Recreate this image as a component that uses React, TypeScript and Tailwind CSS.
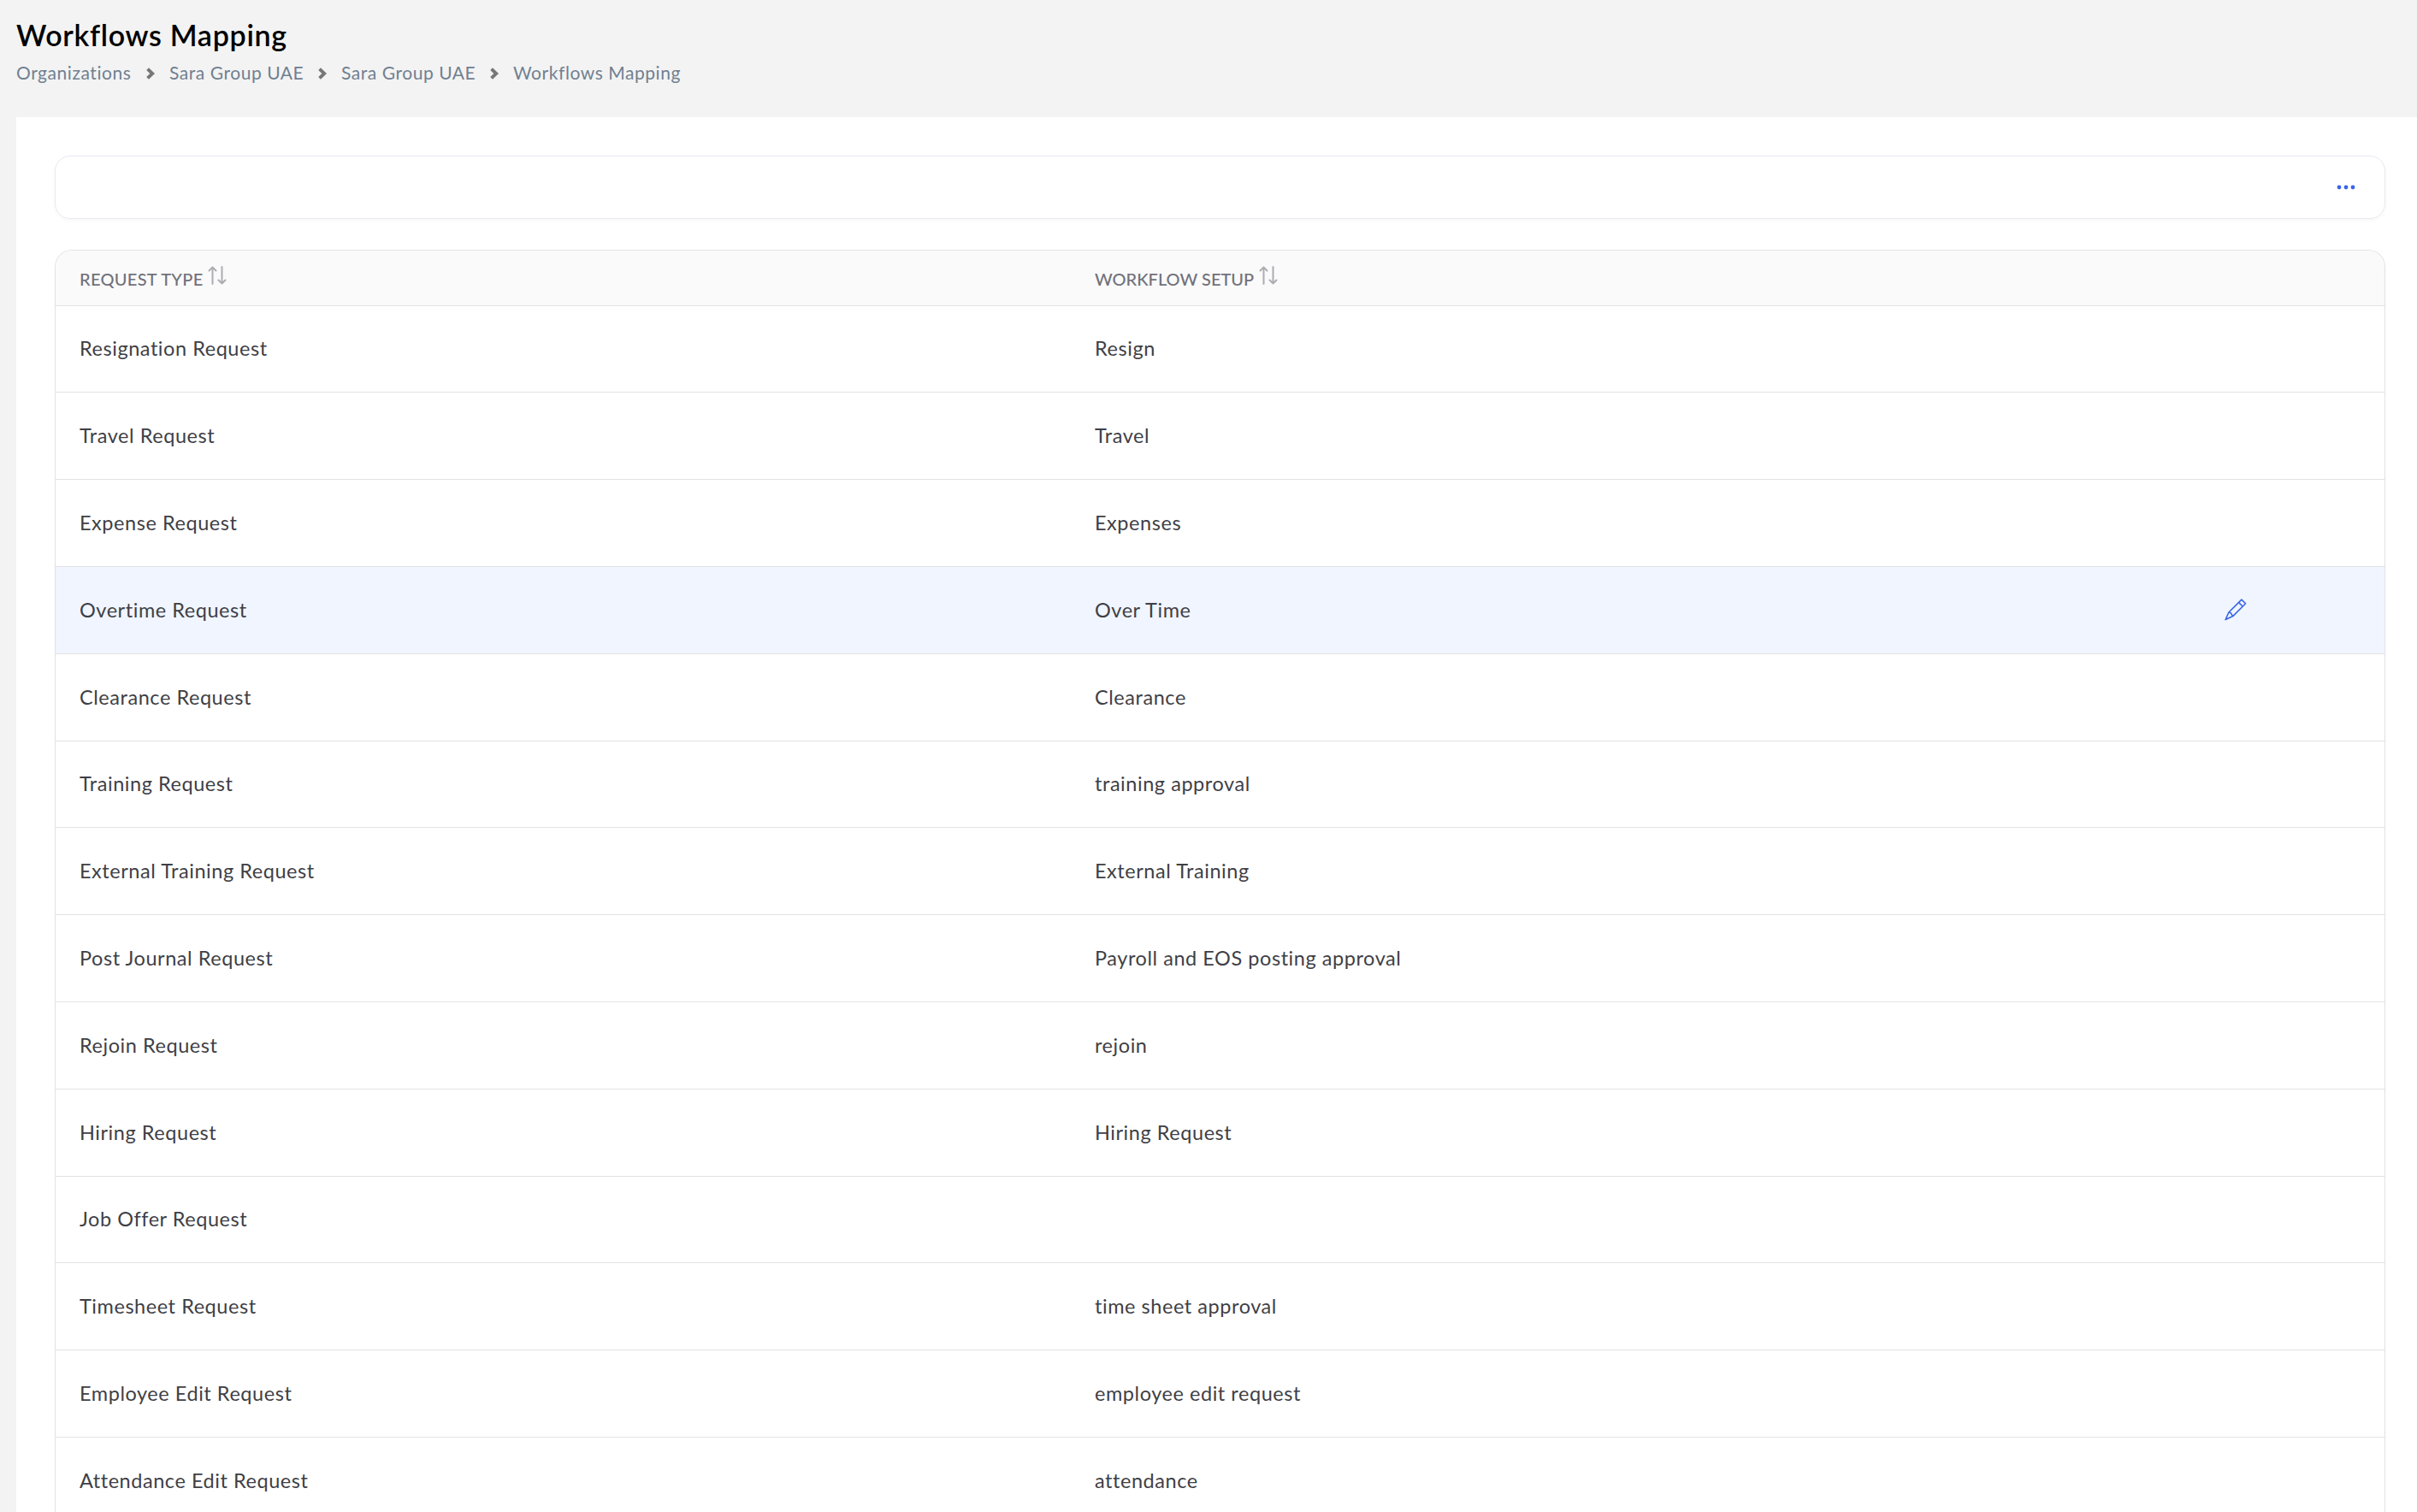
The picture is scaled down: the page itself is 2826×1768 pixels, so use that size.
const breadcrumbs = [
  { label: 'Organizations', width: 'w-[179px]' },
  { label: 'Sara Group UAE', width: 'w-[201px]' },
  { label: 'Sara Group UAE', width: 'w-[201px]' },
  { label: 'Workflows Mapping', width: '' },
]

const rows = [
  { type: 'Resignation Request', workflow: 'Resign' },
  { type: 'Travel Request', workflow: 'Travel' },
  { type: 'Expense Request', workflow: 'Expenses' },
  { type: 'Overtime Request', workflow: 'Over Time', active: true },
  { type: 'Clearance Request', workflow: 'Clearance' },
  { type: 'Training Request', workflow: 'training approval' },
  { type: 'External Training Request', workflow: 'External Training' },
  { type: 'Post Journal Request', workflow: 'Payroll and EOS posting approval' },
  { type: 'Rejoin Request', workflow: 'rejoin' },
  { type: 'Hiring Request', workflow: 'Hiring Request' },
  { type: 'Job Offer Request', workflow: '' },
  { type: 'Timesheet Request', workflow: 'time sheet approval' },
  { type: 'Employee Edit Request', workflow: 'employee edit request' },
  { type: 'Attendance Edit Request', workflow: 'attendance' },
]

function ChevronIcon() {
  return (
    <svg width="10" height="14" viewBox="0 0 10 14" fill="none" stroke="#777777" strokeWidth="4">
      <path d="M1.6 1.6 L7.2 7 L1.6 12.4" />
    </svg>
  )
}

function SortIcon() {
  return (
    <svg
      className="mb-1.5"
      width="22"
      height="22"
      viewBox="0 0 22 22"
      fill="none"
      stroke="#adadb2"
      strokeWidth="2"
      strokeLinecap="round"
      strokeLinejoin="round"
    >
      <path d="M5.5 21 V1.5 M1.5 5.5 L5.5 1.5 L9.5 5.5" />
      <path d="M16.5 1 V20.5 M12.5 16.5 L16.5 20.5 L20.5 16.5" />
    </svg>
  )
}

function PencilIcon() {
  return (
    <svg width="26" height="26" viewBox="0 0 26 26" fill="none" stroke="#3b66e5" strokeWidth="1.6" strokeLinejoin="round">
      <path d="M19.9 1.1 L24.5 5.7 L9.7 20.6 L1.1 24.6 L4.9 16 Z" />
      <path d="M16.5 4.4 L21.2 9" />
      <path d="M4.9 16 L7.4 16.8 L8.4 18.6 L9.7 20.6" />
    </svg>
  )
}

function Header() {
  return (
    <header className="h-[137px] pl-[19px] pt-5">
      <h1 className="h-10 text-[34px] leading-[42px] font-semibold tracking-[0.7px] text-black">Workflows Mapping</h1>
      <nav className="mt-2.5 flex h-[30px] text-[21px] leading-[30px] tracking-[0.55px] text-[#708090]">
        {breadcrumbs.map((item, i) => (
          <div key={i} className={`flex items-center justify-between whitespace-nowrap ${item.width}`}>
            <span>{item.label}</span>
            {item.width && (
              <span className="mt-0.5 pr-[17px]">
                <ChevronIcon />
              </span>
            )}
          </div>
        ))}
      </nav>
    </header>
  )
}

function Toolbar() {
  return (
    <div className="flex h-[74px] items-center justify-end rounded-[18px] border border-[#e8e8f1] pr-[34px] shadow-[0_2px_5px_rgba(0,0,0,0.03)]">
      <button aria-label="More actions">
        <svg width="22" height="6" viewBox="0 0 22 6" fill="#3b66e5">
          <circle cx="3" cy="3" r="2.4" />
          <circle cx="11" cy="3" r="2.4" />
          <circle cx="19" cy="3" r="2.4" />
        </svg>
      </button>
    </div>
  )
}

function Table() {
  return (
    <div className="mt-9 overflow-hidden rounded-t-[20px] border border-b-0 border-[#e2e2e5]">
      <div className="flex h-[64.6px] items-center border-b border-[#e2e2e5] bg-[#fafafa] text-[20px] leading-6 font-medium text-[#71717a]">
        <div className="flex w-[1186px] items-center gap-1.5 pl-7">
          <span className="pt-0.5 tracking-[0.3px]">REQUEST TYPE</span>
          <SortIcon />
        </div>
        <div className="flex items-center gap-1.5 pl-[29px]">
          <span className="pt-0.5">WORKFLOW SETUP</span>
          <SortIcon />
        </div>
      </div>
      {rows.map((row) => (
        <div
          key={row.type}
          className={`flex h-[101.8px] items-center border-b border-[#e2e2e5] text-[23.5px] tracking-[0.55px] text-[#3f3f46] ${row.active ? 'bg-[#f0f5ff]' : ''}`}
        >
          <div className="w-[1186px] pl-7">{row.type}</div>
          <div className="w-[1350px] pl-[29px]">{row.workflow}</div>
          {row.active && (
            <button aria-label="Edit">
              <PencilIcon />
            </button>
          )}
        </div>
      ))}
    </div>
  )
}

export default function App() {
  return (
    <div className="h-[1768px] w-[2826px] overflow-hidden bg-[#f3f3f3] font-['Lato',sans-serif]">
      <Header />
      <main className="ml-[19px] min-h-full bg-white pt-[45px] pr-[37px] pl-[45px]">
        <Toolbar />
        <Table />
      </main>
    </div>
  )
}
